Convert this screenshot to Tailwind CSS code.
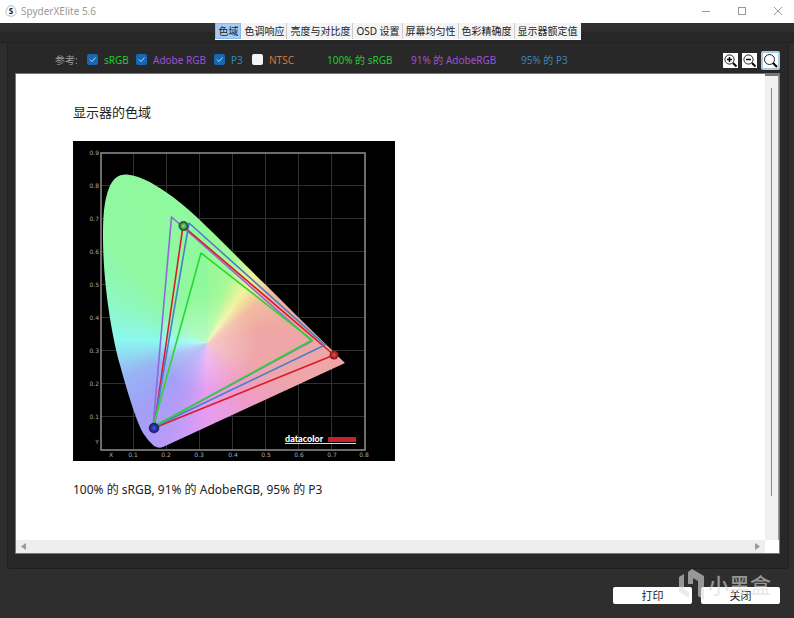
<!DOCTYPE html>
<html lang="zh-CN">
<head>
  <meta charset="UTF-8" />
  <title>SpyderXElite 5.6</title>
  <meta name="viewport" content="width=device-width, initial-scale=1" />
  <script src="https://cdn.jsdelivr.net/npm/@tailwindcss/browser@4"></script>
  <style>
    body {
      font-family: 'Noto Sans', 'Noto Sans CJK SC', sans-serif;
    }
  </style>
</head>
<body class="bg-[#2e2e2e] min-h-screen flex flex-col overflow-hidden">

  <!-- Title bar -->
  <header class="bg-white h-[23px] flex items-center pl-[5px] pr-[10px] pb-px text-[#999]">
    <svg class="w-3 h-3 mr-1" viewBox="0 0 12 12">
      <path d="M3.5 1.2Q6 -.3 8.5 1.2L10.8 5.5Q12.3 8.8 9.2 10.6Q6 12 2.8 10.6Q-.3 8.8 1.2 5.5Z" fill="#fff" stroke="#aaa" stroke-width=".8" />
      <text x="6" y="9" text-anchor="middle" font-size="8" font-weight="bold" fill="#111">S</text>
    </svg>
    <h1 class="text-[10px] leading-4">SpyderXElite 5.6</h1>
    <div class="ml-auto flex gap-6">
      <button aria-label="最小化"><svg class="w-3 h-3" viewBox="0 0 12 12"><path d="M2 6.5h8" stroke="#999" /></svg></button>
      <button aria-label="最大化"><svg class="w-3 h-3" viewBox="0 0 12 12"><rect x="2.5" y="2.5" width="7" height="7" fill="none" stroke="#999" /></svg></button>
      <button aria-label="关闭窗口"><svg class="w-3 h-3" viewBox="0 0 12 12"><path d="M2 2l8 8M10 2l-8 8" stroke="#999" /></svg></button>
    </div>
  </header>

  <!-- Tabs -->
  <nav class="flex justify-center h-5 bg-linear-to-b from-[#303030] from-40% to-[#272727] to-50% border-b border-[#222] pl-[2px]">
    <div class="flex h-[17px] bg-[#f4f4f4] text-[10px] leading-4 text-[#222] whitespace-nowrap border-b border-white">
      <button class="px-[3px] bg-[#a5cdf3] shadow-[inset_0_0_0_1px_#8ab8e8]">色域</button>
      <button class="px-[3px] shadow-[inset_-1px_0_0_#ccc]">色调响应</button>
      <button class="px-[3px] shadow-[inset_-1px_0_0_#ccc]">亮度与对比度</button>
      <button class="px-[3px] shadow-[inset_-1px_0_0_#ccc]">OSD 设置</button>
      <button class="px-[3px] shadow-[inset_-1px_0_0_#ccc]">屏幕均匀性</button>
      <button class="px-[3px] shadow-[inset_-1px_0_0_#ccc]">色彩精确度</button>
      <button class="px-[3px]">显示器额定值</button>
    </div>
  </nav>

  <main class="flex-1 flex flex-col bg-[#282828] border border-t-0 border-[#202020] rounded-b-sm ml-[7px] mr-[5px] pl-[7px] pr-2 pb-[14px]">

    <!-- Reference row -->
    <div class="flex items-center h-[30px] pl-10 pt-1 text-[10px] leading-4 whitespace-nowrap">
      <span class="text-[#999] w-8">参考:</span>
      <label class="flex items-center w-[49px] text-[#1fd02c]">
        <span class="relative w-[17px] h-[13px] shrink-0">
          <input type="checkbox" checked class="block appearance-none w-[11px] h-[11px] rounded-xs bg-[#f4f4f4] checked:bg-[#1767b3]" />
          <svg class="absolute left-0 top-0 w-[11px] h-[11px] pointer-events-none" viewBox="0 0 11 11"><path d="M3 5.5l2 2 3.5-4" fill="none" stroke="#b9dcff" /></svg>
        </span>
        sRGB
      </label>
      <label class="flex items-center w-[78px] text-[#a04fd6]">
        <span class="relative w-[17px] h-[13px] shrink-0">
          <input type="checkbox" checked class="block appearance-none w-[11px] h-[11px] rounded-xs bg-[#f4f4f4] checked:bg-[#1767b3]" />
          <svg class="absolute left-0 top-0 w-[11px] h-[11px] pointer-events-none" viewBox="0 0 11 11"><path d="M3 5.5l2 2 3.5-4" fill="none" stroke="#b9dcff" /></svg>
        </span>
        Adobe RGB
      </label>
      <label class="flex items-center w-[38px] text-[#3586bd]">
        <span class="relative w-[17px] h-[13px] shrink-0">
          <input type="checkbox" checked class="block appearance-none w-[11px] h-[11px] rounded-xs bg-[#f4f4f4] checked:bg-[#1767b3]" />
          <svg class="absolute left-0 top-0 w-[11px] h-[11px] pointer-events-none" viewBox="0 0 11 11"><path d="M3 5.5l2 2 3.5-4" fill="none" stroke="#b9dcff" /></svg>
        </span>
        P3
      </label>
      <label class="flex items-center w-[75px] text-[#d8743f]">
        <span class="w-[17px] h-[13px] shrink-0">
          <input type="checkbox" class="block appearance-none w-[11px] h-[11px] rounded-xs bg-[#f4f4f4] checked:bg-[#1767b3]" />
        </span>
        NTSC
      </label>
      <span class="w-[84px] text-[#1fd02c]">100% 的 sRGB</span>
      <span class="w-[110px] text-[#a04fd6]">91% 的 AdobeRGB</span>
      <span class="text-[#3586bd]">95% 的 P3</span>
      <div class="ml-auto flex items-center gap-1">
        <button aria-label="放大" class="bg-white w-[15px] h-[15px]">
          <svg class="w-[15px] h-[15px]" viewBox="0 0 15 15"><circle cx="6.5" cy="6.5" r="4.6" fill="#fff" stroke="#222" /><path d="M4 6.5h5M6.5 4v5" stroke="#000" stroke-width="1.5" /><path d="M10 10l3.5 3.5" stroke="#000" stroke-width="2" /></svg>
        </button>
        <button aria-label="缩小" class="bg-white w-[15px] h-[15px]">
          <svg class="w-[15px] h-[15px]" viewBox="0 0 15 15"><circle cx="6.5" cy="6.5" r="4.6" fill="#fff" stroke="#222" /><path d="M4 6.5h5" stroke="#000" stroke-width="1.5" /><path d="M10 10l3.5 3.5" stroke="#000" stroke-width="2" /></svg>
        </button>
        <button aria-label="实际大小" class="bg-white w-[19px] h-[19px] rounded-xs border-2 border-[#a9cbe3]">
          <svg class="w-[15px] h-[15px]" viewBox="0 0 15 15"><circle cx="6.5" cy="6.5" r="5" fill="#fff" stroke="#222" /><path d="M10 10l4 4" stroke="#000" stroke-width="2.2" /></svg>
        </button>
      </div>
    </div>

    <!-- Report view -->
    <section class="flex-1 grid grid-cols-[1fr_14px] grid-rows-[1fr_13px] bg-white border border-[#777]">
      <div class="pl-[57px] pt-[28px] text-[#222]">
        <h2 class="text-[13px] leading-5">显示器的色域</h2>
        <svg class="block mt-[19px] w-[322px] h-[320px]" viewBox="0 0 322 320" role="img" aria-label="显示器的色域">
          <defs>
            <clipPath id="locus">
              <path d="M30 96C30 75 31 60 36 47C40 37 46 33 54 33.500C70 35 86 46 100 56C113 66 124 76 134 86C151 102 173 125 193 144L223 174L272 222L90 306Q86 308 81 305Q75 300 70 292C64 281 56 257 47 224C39 196 30 143 30 96Z" />
            </clipPath>
            <radialGradient id="green"><stop offset="0" stop-color="#8ee878" /><stop offset=".5" stop-color="#58a05a" /><stop offset="1" stop-color="#1b4a22" /></radialGradient>
            <radialGradient id="blue"><stop offset="0" stop-color="#5050e0" /><stop offset="1" stop-color="#141470" /></radialGradient>
            <radialGradient id="red"><stop offset="0" stop-color="#e85050" /><stop offset="1" stop-color="#8a1010" /></radialGradient>
          </defs>
          <rect width="322" height="320" fill="#000" />
          <path d="M61 12V309M94 12V309M127 12V309M160 12V309M193 12V309M226 12V309M259 12V309M28 45H292M28 78H292M28 111H292M28 144H292M28 177H292M28 210H292M28 243H292M28 276H292" transform="translate(-.5 -.5)" stroke="#303030" fill="none" />
          <foreignObject width="322" height="320" clip-path="url(#locus)">
            <div class="w-full h-full bg-[radial-gradient(circle_at_134px_202px,#ffffff66,#ffffff00_50px),conic-gradient(from_0deg_at_134px_202px,#98f898_0deg,#a8f898_18deg,#f2f49c_35deg,#f2bca0_52deg,#eea8a4_75deg,#eea6ac_115deg,#ee9cc8_145deg,#e89cf0_180deg,#b49cf8_205deg,#a0a0f6_225deg,#98b4f4_248deg,#8cf8f0_272deg,#8ef8c4_292deg,#90f8a2_315deg,#90f89c_360deg)]"></div>
          </foreignObject>
          <path d="M28 12H292V309H28Z" fill="none" stroke="#909090" stroke-width="1.500" />

          <!-- Reference gamuts -->
          <g fill="none" stroke-width="1.600" stroke-linejoin="round">
            <path d="M98.500 76L239 200L80 286Z" stroke="#9068dc" />
            <path d="M110 85L261 214L81 287Z" stroke="#e01828" />
            <path d="M116 82L252 204L81 286Z" stroke="#4880c8" />
            <path d="M128 112L239 199L80 286Z" stroke="#28d830" />
          </g>
          <circle cx="110.500" cy="85" r="4.500" fill="url(#green)" stroke="#28502c" />
          <circle cx="261" cy="214" r="4.500" fill="url(#red)" />
          <circle cx="81" cy="287" r="5" fill="url(#blue)" stroke="#202050" stroke-width=".5" />

          <g fill="#aaa" font-family="DejaVu Sans" font-size="6" text-anchor="end">
            <text x="26" y="14">0.9</text><text x="26" y="47">0.8</text><text x="26" y="80">0.7</text>
            <text x="26" y="113">0.6</text><text x="26" y="146">0.5</text><text x="26" y="179">0.4</text>
            <text x="26" y="212">0.3</text><text x="26" y="245">0.2</text><text x="26" y="278">0.1</text>
            <text x="26" y="303">Y</text>
          </g>
          <g fill="#aaa" font-family="DejaVu Sans" font-size="6" text-anchor="middle">
            <text x="38" y="316">X</text><text x="60" y="316">0.1</text><text x="93" y="316">0.2</text>
            <text x="126" y="316">0.3</text><text x="160" y="316">0.4</text><text x="193" y="316">0.5</text>
            <text x="226" y="316">0.6</text><text x="259" y="316">0.7</text><text x="291" y="316">0.8</text>
          </g>

          <text x="212" y="301" fill="#fff" font-family="Lato" font-size="9" font-weight="900">datacolor</text>
          <rect x="255" y="296" width="28" height="5" fill="#c8202c" />
          <path d="M212 302.500H283" stroke="#ddd" />
        </svg>
        <p class="mt-[19px] text-[12px] leading-5">100% 的 sRGB, 91% 的 AdobeRGB, 95% 的 P3</p>
      </div>
      <div class="bg-[#f0f0f0] border-t-2 border-r border-[#777] border-r-[#999] pt-3 pb-11 flex justify-center">
        <div class="w-px bg-[#888]"></div>
      </div>
      <div class="bg-[#eee] flex justify-between items-center px-[5px]">
        <svg class="w-[5px] h-[7px]" viewBox="0 0 5 7"><path d="M5 0v7L0 3.500z" fill="#999" /></svg>
        <svg class="w-[5px] h-[7px]" viewBox="0 0 5 7"><path d="M0 0v7l5-3.500z" fill="#999" /></svg>
      </div>
    </section>
  </main>

  <footer class="relative flex justify-end gap-[9px] pt-[18px] pr-[14px] pb-[14px] text-[11px] leading-4 text-[#222]">
    <button class="w-[79px] h-[17px] bg-white rounded-xs">打印</button>
    <button class="w-[79px] h-[17px] bg-white rounded-xs">关闭</button>

    <!-- Watermark -->
    <div class="absolute right-[23px] top-0 flex items-center gap-[3px] text-[#ddd]/60 pointer-events-none">
      <svg class="w-[27px] h-[32px]" viewBox="0 0 27 32"><path d="M1 8L6 5V20L11 23V29L1 23ZM10 3L14 0L26 7V31L20 27V12L15 9V15H10Z" fill="currentColor" /></svg>
      <span class="text-[21px] leading-8 font-medium">小黑盒</span>
    </div>
  </footer>
</body>
</html>
